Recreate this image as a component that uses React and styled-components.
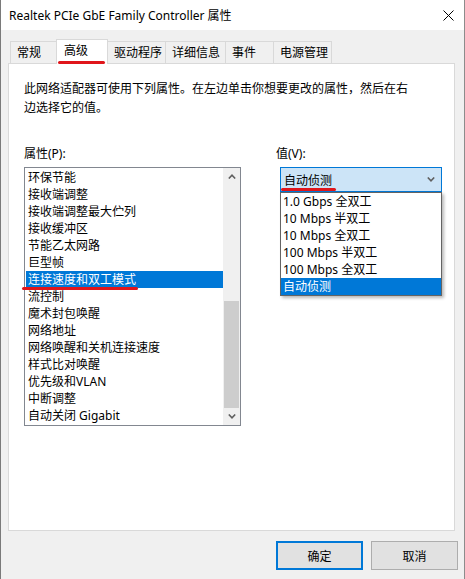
import React from 'react';
import styled, { createGlobalStyle } from 'styled-components';

const GlobalStyle = createGlobalStyle`
  html, body {
    margin: 0;
    padding: 0;
    background: #f0f0f0;
  }
  * {
    box-sizing: border-box;
  }
`;

const Window = styled.div`
  width: 465px;
  height: 579px;
  display: flex;
  flex-direction: column;
  background: #f0f0f0;
  border-left: 1px solid #7a7a7a;
  border-right: 1px solid #8c8c8c;
  font-family: "Noto Sans", "Noto Sans CJK SC", sans-serif;
  font-size: 12px;
  color: #000;
`;

const TitleBar = styled.div`
  height: 30px;
  flex-shrink: 0;
  display: flex;
  align-items: center;
  justify-content: space-between;
  padding: 0 10px 0 8px;
  background: #fff;
`;

const Title = styled.span`
  line-height: 17px;
  white-space: nowrap;
`;

const Content = styled.div`
  padding: 9px 9px 0 7px;
`;

const TabStrip = styled.div`
  position: relative;
  z-index: 1;
  height: 25px;
  margin-bottom: -1px;
  padding-left: 2px;
  display: flex;
  align-items: flex-start;
`;

const Tab = styled.div`
  position: relative;
  width: ${p => p.$w + 1}px;
  margin-right: -1px;
  margin-top: ${p => (p.$active ? 0 : 2)}px;
  height: ${p => (p.$active ? 25 : 22)}px;
  padding-left: ${p => (p.$active ? 7 : 6)}px;
  line-height: ${p => (p.$active ? 21 : 21)}px;
  background: ${p => (p.$active ? '#fff' : '#f0f0f0')};
  border: 1px solid #d9d9d9;
  border-bottom: none;
  z-index: ${p => (p.$active ? 2 : 1)};
  white-space: nowrap;
`;

const Mark = styled.span`
  position: absolute;
  left: ${p => p.$left}px;
  top: ${p => p.$top}px;
  width: ${p => p.$width}px;
  height: 3px;
  border-radius: 2px;
  background: #e0161b;
  z-index: 5;
`;

const Panel = styled.div`
  height: 468px;
  background: #fff;
  border: 1px solid #d9d9d9;
  padding: 15px 15px 0 15px;
`;

const Description = styled.p`
  margin: 0;
  width: 395px;
  line-height: 19px;
`;

const Columns = styled.div`
  display: flex;
  gap: 35px;
  margin-top: 28px;
`;

const Column = styled.div`
  display: flex;
  flex-direction: column;
  width: ${p => p.$w}px;
`;

const Label = styled.div`
  line-height: 17px;
  margin-bottom: 5px;
`;

const ListBox = styled.div`
  width: 217px;
  height: 259px;
  display: flex;
  border: 1px solid #828790;
`;

const Items = styled.div`
  flex: 1;
  padding: 1px 0 1px 1px;
`;

const Item = styled.div`
  position: relative;
  height: 17px;
  line-height: 17px;
  padding-left: 2px;
  white-space: nowrap;
  background: ${p => (p.$selected ? '#0078d7' : 'transparent')};
  color: ${p => (p.$selected ? '#fff' : '#000')};
`;

const ScrollBar = styled.div`
  width: 17px;
  display: flex;
  flex-direction: column;
  background: #f0f0f0;
`;

const ArrowButton = styled.div`
  height: 17px;
  display: flex;
  align-items: center;
  justify-content: center;
`;

const Track = styled.div`
  flex: 1;
  display: flex;
  flex-direction: column;
  justify-content: flex-end;
  padding: 0 1px;
`;

const Thumb = styled.div`
  height: 107px;
  background: #cdcdcd;
`;

const ComboWrap = styled.div`
  position: relative;
  margin-left: 4px;
  width: 162px;
`;

const Combo = styled.div`
  position: relative;
  height: 25px;
  display: flex;
  align-items: center;
  justify-content: space-between;
  padding: 0 6px 0 3px;
  background: #cce4f7;
  border: 1px solid #0078d7;
`;

const Dropdown = styled.div`
  position: absolute;
  top: 25px;
  left: 0;
  width: 162px;
  background: #fff;
  border: 1px solid #646464;
  box-shadow: 2px 2px 3px rgba(0, 0, 0, 0.28);
  z-index: 3;
`;

const Option = styled.div`
  height: 17px;
  line-height: 17px;
  padding-left: 2px;
  white-space: nowrap;
  background: ${p => (p.$selected ? '#0078d7' : '#fff')};
  color: ${p => (p.$selected ? '#fff' : '#000')};
`;

const ButtonRow = styled.div`
  display: flex;
  justify-content: flex-end;
  gap: 8px;
  margin-top: 10px;
  padding-right: 6px;
`;

const Button = styled.button`
  width: 87px;
  height: 29px;
  padding: 0;
  font: inherit;
  color: #000;
  background: #e1e1e1;
  border: ${p => (p.$primary ? '2px solid #0078d7' : '1px solid #adadad')};
`;

const Chevron = ({ up }) => (
  <svg width="8" height="5" viewBox="0 0 8 5">
    <path
      d={up ? 'M0.8 4.5 L4 1.2 L7.2 4.5' : 'M0.8 0.5 L4 3.8 L7.2 0.5'}
      fill="none"
      stroke="#606060"
      strokeWidth="1.6"
    />
  </svg>
);

const CloseIcon = () => (
  <svg width="11" height="11" viewBox="0 0 11 11">
    <path d="M0.5 0.5 L10.5 10.5 M10.5 0.5 L0.5 10.5" stroke="#000" strokeWidth="1" />
  </svg>
);

const tabs = [
  { label: '常规', w: 46 },
  { label: '高级', w: 51, active: true },
  { label: '驱动程序', w: 58 },
  { label: '详细信息', w: 60 },
  { label: '事件', w: 48 },
  { label: '电源管理', w: 58 },
];

const properties = [
  '环保节能',
  '接收端调整',
  '接收端调整最大伫列',
  '接收缓冲区',
  '节能乙太网路',
  '巨型帧',
  '连接速度和双工模式',
  '流控制',
  '魔术封包唤醒',
  '网络地址',
  '网络唤醒和关机连接速度',
  '样式比对唤醒',
  '优先级和VLAN',
  '中断调整',
  '自动关闭 Gigabit',
];

const options = [
  '1.0 Gbps 全双工',
  '10 Mbps 半双工',
  '10 Mbps 全双工',
  '100 Mbps 半双工',
  '100 Mbps 全双工',
  '自动侦测',
];

export default function App() {
  return (
    <>
      <GlobalStyle />
      <Window>
        <TitleBar>
          <Title>Realtek PCIe GbE Family Controller 属性</Title>
          <CloseIcon />
        </TitleBar>

        <Content>
          <TabStrip>
            {tabs.map(t => (
              <Tab key={t.label} $w={t.w} $active={t.active}>
                {t.label}
                {t.active && <Mark $left={1} $top={21} $width={47} />}
              </Tab>
            ))}
          </TabStrip>

          <Panel>
            <Description>
              此网络适配器可使用下列属性。在左边单击你想要更改的属性，然后在右边选择它的值。
            </Description>

            <Columns>
              <Column $w={217}>
                <Label>属性(P):</Label>
                <ListBox>
                  <Items>
                    {properties.map(p => (
                      <Item key={p} $selected={p === '连接速度和双工模式'}>
                        {p}
                        {p === '连接速度和双工模式' && (
                          <Mark $left={-4} $top={16} $width={116} />
                        )}
                      </Item>
                    ))}
                  </Items>
                  <ScrollBar>
                    <ArrowButton>
                      <Chevron up />
                    </ArrowButton>
                    <Track>
                      <Thumb />
                    </Track>
                    <ArrowButton>
                      <Chevron />
                    </ArrowButton>
                  </ScrollBar>
                </ListBox>
              </Column>

              <Column $w={166}>
                <Label>值(V):</Label>
                <ComboWrap>
                  <Combo>
                    <span>自动侦测</span>
                    <Chevron />
                    <Mark $left={0} $top={20} $width={55} />
                  </Combo>
                  <Dropdown>
                    {options.map(o => (
                      <Option key={o} $selected={o === '自动侦测'}>
                        {o}
                      </Option>
                    ))}
                  </Dropdown>
                </ComboWrap>
              </Column>
            </Columns>
          </Panel>
        </Content>

        <ButtonRow>
          <Button $primary>确定</Button>
          <Button>取消</Button>
        </ButtonRow>
      </Window>
    </>
  );
}
